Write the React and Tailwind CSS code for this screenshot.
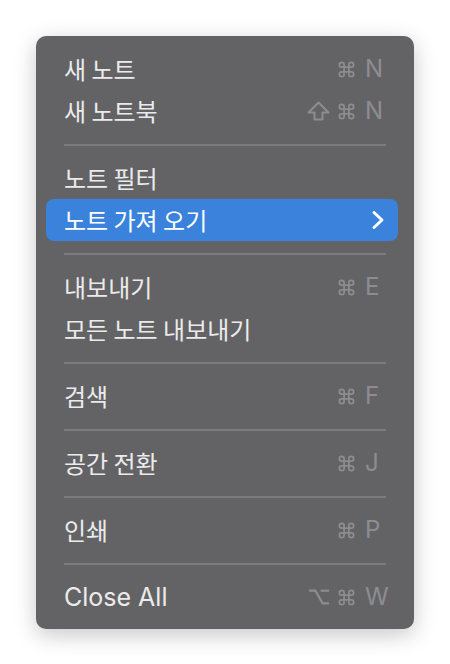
import React from 'react';

const CmdIcon = () => (
    <svg width="19" height="19" viewBox="0 0 24 24" fill="none" stroke="currentColor" strokeWidth="2.2" strokeLinecap="round" strokeLinejoin="round">
        <path d="M15 6v12a3 3 0 1 0 3-3H6a3 3 0 1 0 3 3V6a3 3 0 1 0-3 3h12a3 3 0 1 0-3-3" />
    </svg>
);

const ShiftIcon = () => (
    <svg width="23" height="20" viewBox="0 0 23 20" fill="none" stroke="currentColor" strokeWidth="2" strokeLinejoin="round">
        <path d="M7.5 18.5v-7H1.5L11.5 1.5l10 10h-6v7h-8z" />
    </svg>
);

const OptIcon = () => (
    <svg width="22" height="18" viewBox="0 0 24 20" fill="none" stroke="currentColor" strokeWidth="2.4" strokeLinecap="square">
        <path d="M2 3h6l8 14h6" />
        <path d="M15 3h7" />
    </svg>
);

const Chevron = () => (
    <svg width="14" height="22" viewBox="0 0 14 22" fill="none" stroke="white" strokeWidth="3" strokeLinecap="round" strokeLinejoin="round">
        <path d="M3 3.5l8 7.5-8 7.5" />
    </svg>
);

const items = [
    { label: '새 노트', mods: ['cmd'], key: 'N' },
    { label: '새 노트북', mods: ['shift', 'cmd'], key: 'N' },
    'sep',
    { label: '노트 필터' },
    { label: '노트 가져 오기', active: true, sub: true },
    'sep',
    { label: '내보내기', mods: ['cmd'], key: 'E' },
    { label: '모든 노트 내보내기' },
    'sep',
    { label: '검색', mods: ['cmd'], key: 'F' },
    'sep',
    { label: '공간 전환', mods: ['cmd'], key: 'J' },
    'sep',
    { label: '인쇄', mods: ['cmd'], key: 'P' },
    'sep',
    { label: 'Close All', mods: ['opt', 'cmd'], key: 'W', latin: true },
];

const Mod = ({ type }) => {
    if (type === 'shift') return <ShiftIcon />;
    if (type === 'opt') return <OptIcon />;
    return <CmdIcon />;
};

const MenuRow = ({ item }) => (
    <div
        className={`ml-[10px] mr-[16px] h-[42px] flex items-center pl-[18px] rounded-[8px] ${
            item.active ? 'bg-[#3a82dc] text-white' : 'text-[#ebebec]'
        }`}
    >
        <span
            className={`flex-1 leading-none ${
                item.latin
                    ? "text-[25px] font-['Inter',sans-serif]"
                    : "text-[24px] font-['Noto_Sans_CJK_KR',sans-serif]"
            }`}
        >
            {item.label}
        </span>
        {item.key && (
            <div className="flex items-center text-[#8d8d91]">
                <div className="flex items-center gap-[7px]">
                    {item.mods.map((m, i) => (
                        <Mod key={i} type={m} />
                    ))}
                </div>
                <span className="ml-[9px] w-[33px] text-[24px] leading-none font-['Inter',sans-serif]">
                    {item.key}
                </span>
            </div>
        )}
        {item.sub && (
            <div className="mr-[13px]">
                <Chevron />
            </div>
        )}
    </div>
);

export default function App() {
    return (
        <div className="w-[450px] h-[664px] bg-white pt-[36px] pl-[36px]">
            <div className="w-[378px] bg-[#636366] rounded-[10px] pt-[12px] pb-[11px] shadow-[0_6px_22px_rgba(0,0,0,0.22)]">
                {items.map((item, i) =>
                    item === 'sep' ? (
                        <div key={i} className="h-[25px] flex items-center">
                            <div className="mx-[28px] h-[2px] flex-1 bg-[#7b7b7f]" />
                        </div>
                    ) : (
                        <MenuRow key={i} item={item} />
                    )
                )}
            </div>
        </div>
    );
}
